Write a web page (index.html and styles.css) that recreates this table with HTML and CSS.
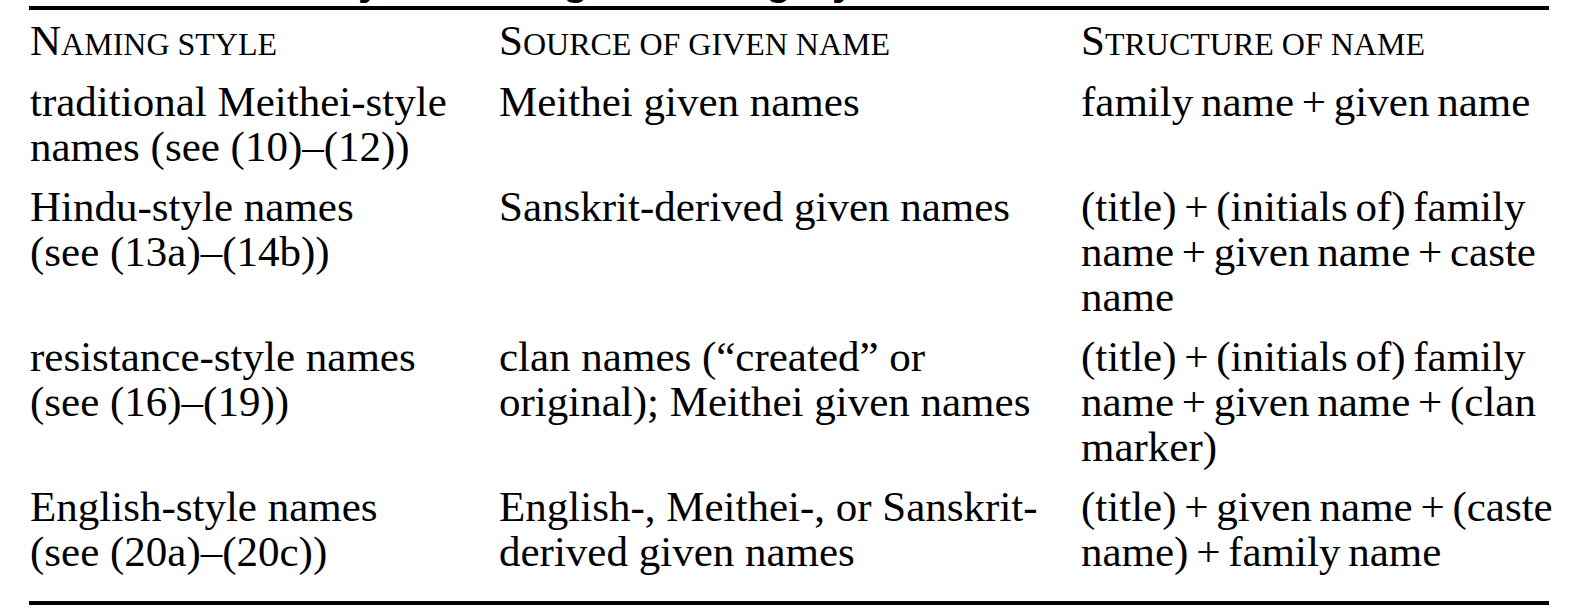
FILE: index.html
```html
<!DOCTYPE html>
<html lang="en">
<head>
<meta charset="utf-8">
<title>Naming styles</title>
<link rel="stylesheet" href="styles.css">
</head>
<body>
<div class="page">
  <div class="caption"><div class="caption-text">Table 1. Summary of naming and category</div></div>
  <div class="table">
    <div class="row head">
      <div class="cell">N<span class="sc">aming style</span></div>
      <div class="cell">S<span class="sc">ource of given name</span></div>
      <div class="cell">S<span class="sc">tructure of name</span></div>
    </div>
    <div class="row first">
      <div class="cell">traditional Meithei-style<br>names (see (10)–(12))</div>
      <div class="cell">Meithei given names</div>
      <div class="cell struct">family name + given name</div>
    </div>
    <div class="row">
      <div class="cell">Hindu-style names<br>(see (13a)–(14b))</div>
      <div class="cell">Sanskrit-derived given names</div>
      <div class="cell struct">(title) + (initials of) family<br>name + given name + caste<br>name</div>
    </div>
    <div class="row">
      <div class="cell">resistance-style names<br>(see (16)–(19))</div>
      <div class="cell">clan names (“created” or<br>original); Meithei given names</div>
      <div class="cell struct">(title) + (initials of) family<br>name + given name + (clan<br>marker)</div>
    </div>
    <div class="row last">
      <div class="cell">English-style names<br>(see (20a)–(20c))</div>
      <div class="cell">English-, Meithei-, or Sanskrit-<br>derived given names</div>
      <div class="cell struct">(title) + given name + (caste<br>name) + family name</div>
    </div>
  </div>
</div>
</body>
</html>
```
FILE: styles.css
```css
html, body {
  margin: 0;
  padding: 0;
  background: #ffffff;
  color: #000000;
}

.page {
  padding-left: 29px;
  width: 1520px;
}

.caption {
  height: 6px;
  overflow: hidden;
}

.caption-text {
  font-family: "Liberation Sans", Arial, sans-serif;
  font-weight: bold;
  font-size: 41px;
  line-height: 41px;
  margin-top: -39px;
  padding-left: 4px;
  white-space: nowrap;
}

.table {
  border-top: 4px solid #000;
  border-bottom: 4px solid #000;
  padding-left: 1px;
  padding-bottom: 27px;
  font-family: "Liberation Serif", "Times New Roman", serif;
  font-size: 43px;
  line-height: 45px;
}

.row {
  display: grid;
  grid-template-columns: 469px 582px 1fr;
  padding-top: 15px;
}

.row.head {
  padding-top: 8px;
}

.row.first {
  padding-top: 12px;
}

.cell {
  white-space: nowrap;
}

.struct {
  word-spacing: -3px;
}

.sc {
  font-size: 32px;
  text-transform: uppercase;
}
```
